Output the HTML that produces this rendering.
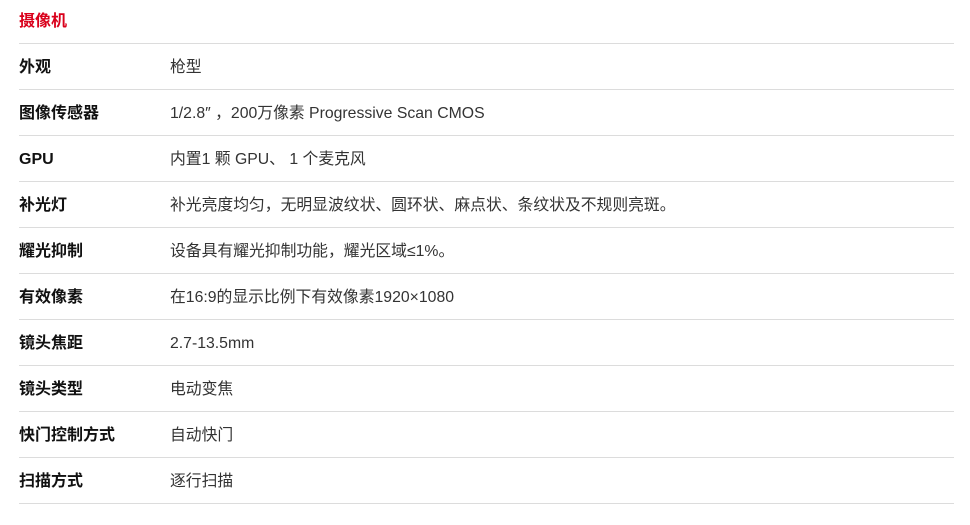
<!DOCTYPE html>
<html><head><meta charset="utf-8"><style>
body{margin:0;background:#fff;width:970px;height:525px;overflow:hidden;font-family:"Liberation Sans","Noto Sans CJK SC",sans-serif;}
.t{position:absolute;left:19px;top:11px;font-size:16px;font-weight:bold;color:#d9001b;line-height:22px;}
.r{position:absolute;left:19px;width:935px;height:46px;border-top:1px solid #dcdcdc;}
.k{position:absolute;left:0;top:13px;font-size:16px;font-weight:bold;color:#111;line-height:22px;}
.v{position:absolute;left:151px;top:13px;font-size:15.8px;color:#333;line-height:22px;}
.end{position:absolute;left:19px;width:935px;top:503px;border-top:1px solid #dcdcdc;}
</style></head><body>
<div class="t">摄像机</div>
<div class="r" style="top:43px"><div class="k">外观</div><div class="v">枪型</div></div>
<div class="r" style="top:89px"><div class="k">图像传感器</div><div class="v">1/2.8″ ，200万像素 Progressive Scan CMOS</div></div>
<div class="r" style="top:135px"><div class="k">GPU</div><div class="v">内置1 颗 GPU、 1 个麦克风</div></div>
<div class="r" style="top:181px"><div class="k">补光灯</div><div class="v">补光亮度均匀，无明显波纹状、圆环状、麻点状、条纹状及不规则亮斑。</div></div>
<div class="r" style="top:227px"><div class="k">耀光抑制</div><div class="v">设备具有耀光抑制功能，耀光区域≤1%。</div></div>
<div class="r" style="top:273px"><div class="k">有效像素</div><div class="v">在16:9的显示比例下有效像素1920×1080</div></div>
<div class="r" style="top:319px"><div class="k">镜头焦距</div><div class="v">2.7-13.5mm</div></div>
<div class="r" style="top:365px"><div class="k">镜头类型</div><div class="v">电动变焦</div></div>
<div class="r" style="top:411px"><div class="k">快门控制方式</div><div class="v">自动快门</div></div>
<div class="r" style="top:457px"><div class="k">扫描方式</div><div class="v">逐行扫描</div></div>
<div class="end"></div>
</body></html>
